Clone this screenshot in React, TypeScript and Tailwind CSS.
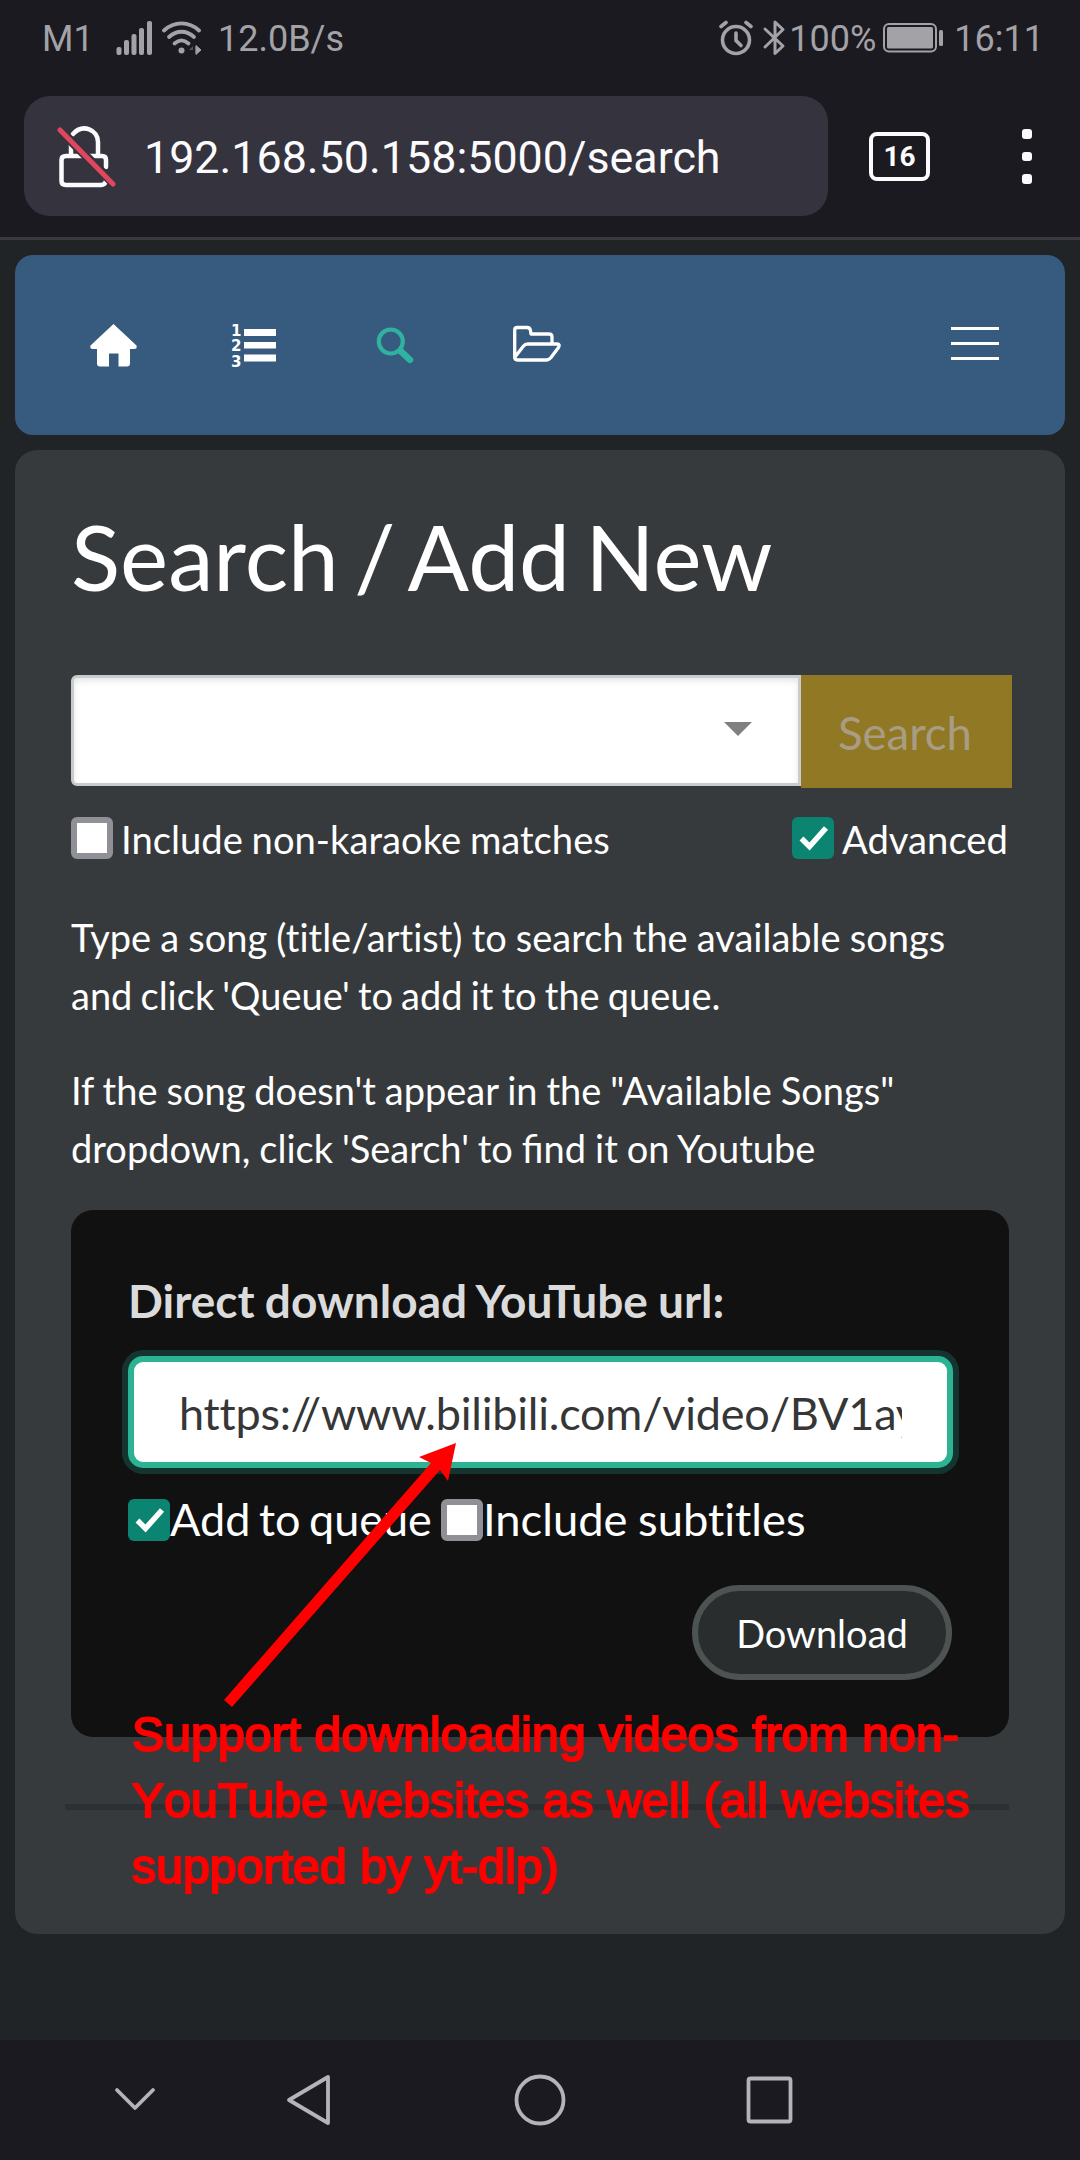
import React from "react";

function StatusBar() {
  return (
    <div className="flex h-[74px] items-center justify-between pt-[1px] pr-[36px] pl-[42px] font-['Roboto',sans-serif] text-[36px] leading-none text-[#a3a2a7]">
      <div className="flex items-center">
        <span className="mt-[2px] w-[74px]">M1</span>
        <svg className="h-[36px] w-[36px]" viewBox="0 0 36 36" fill="currentColor">
          <rect x="0.5" y="27" width="5" height="8" rx="2" />
          <rect x="8" y="20" width="5" height="15" rx="2" />
          <rect x="15.5" y="14" width="5" height="21" rx="2" />
          <rect x="23" y="8" width="5" height="27" rx="2" />
          <rect x="31" y="1" width="5" height="34" rx="2" />
        </svg>
        <svg className="ml-[10px] h-[36px] w-[40px]" viewBox="0 0 40 36" fill="none" stroke="currentColor" strokeWidth="3.8" strokeLinecap="round">
          <path d="M2 10.5C12 1 27 1 37 10.5" />
          <path d="M7 17C14.500 10 24.500 10 32 17" />
          <path d="M12.500 23.500C17 19.500 22 19.500 26.500 23.500" />
          <circle cx="19.500" cy="30.500" r="3" fill="currentColor" stroke="none" />
          <path d="M34 26v8M34.500 26l4.500 4-4.500 4z" strokeWidth="1" fill="currentColor" />
          <path d="M31 26l-4 4h4z" strokeWidth="1" fill="#55545a" stroke="none" />
        </svg>
        <span className="mt-[2px] ml-[16px]">12.0B/s</span>
      </div>
      <div className="flex items-center">
        <svg className="h-[36px] w-[34px]" viewBox="0 0 34 36" fill="none" stroke="currentColor" strokeWidth="3.600" strokeLinecap="round">
          <circle cx="17" cy="20" r="13.500" />
          <path d="M17 13v7.500l5 5" />
          <path d="M2 6.500L7 2.500M32 6.500L27 2.500" />
        </svg>
        <svg className="ml-[9px] h-[36px] w-[24px]" viewBox="0 0 24 36" fill="none" stroke="currentColor" strokeWidth="3" strokeLinejoin="round" strokeLinecap="round">
          <path d="M3 9L21 26L13 33.500V2L21 9.500L3 27" />
        </svg>
        <span className="mt-[2px] ml-[3px] w-[90px] whitespace-nowrap">100%</span>
        <svg className="ml-[4px] h-[30px] w-[61px]" viewBox="0 0 61 30">
          <rect x="1" y="1" width="52" height="27.500" rx="5" fill="none" stroke="currentColor" strokeWidth="2" />
          <rect x="4" y="4" width="46" height="21.500" rx="1.500" fill="currentColor" />
          <rect x="56" y="7" width="4" height="16" rx="1.500" fill="currentColor" />
        </svg>
        <span className="mt-[2px] ml-[10px]">16:11</span>
      </div>
    </div>
  );
}

function BrowserBar() {
  return (
    <div className="flex h-[166px] items-start border-b-[3px] border-[#3a393f] pt-[22px] pl-6">
      <div className="flex h-[120px] w-[804px] items-center rounded-[26px] bg-[#35333d] pl-[33px]">
        <svg className="h-[64px] w-[60px]" viewBox="0 0 60 64" fill="none" strokeWidth="4.500" strokeLinecap="round">
          <path d="M16 10C26 -1 41 6 41 18V32M14 18V32M9 32H45Q49 32 49 36V43M49 57Q48 61 44 61H9Q4.500 61 4.500 57V36Q4.500 32 9 32" stroke="#fbfbfe" />
          <path d="M3.500 6.500L57 60" stroke="#35333d" strokeWidth="9" strokeLinecap="butt" />
          <path d="M3 6L56 60" stroke="#e0475f" strokeWidth="5" />
        </svg>
        <span className="mt-[4px] ml-[27px] font-['Roboto',sans-serif] text-[44.800px] leading-none whitespace-nowrap text-[#fbfbfe]">192.168.50.158:5000/search</span>
      </div>
      <div className="mt-[36px] ml-[41px] flex h-[49px] w-[61px] items-center justify-center rounded-[8px] border-[4.500px] border-[#fbfbfe] font-['Roboto',sans-serif] text-[28px] leading-none font-bold text-[#fbfbfe]">16</div>
      <div className="mt-[33px] ml-[92px] flex flex-col gap-[13px]">
        <i className="size-[9.500px] rounded-[3px] bg-[#fbfbfe]" />
        <i className="size-[9.500px] rounded-[3px] bg-[#fbfbfe]" />
        <i className="size-[9.500px] rounded-[3px] bg-[#fbfbfe]" />
      </div>
    </div>
  );
}

function NavBar() {
  return (
    <nav className="mx-[15px] mt-[15px] flex h-[180px] rounded-[18px] bg-[#375a7f] pt-[65px] pl-[72px] text-white">
      <svg className="h-[54px] w-[54px]" viewBox="0 0 54 54" fill="currentColor">
        <path d="M26.500 4L49.500 25.500Q50.500 29 47 29H43V43.500Q43 46.500 40 46.500H31.500V33.500H22V46.500H13Q10 46.500 10 43.500V29H6Q2.500 29 3.500 25.500Z" />
      </svg>
      <svg className="ml-[88px] h-[54px] w-[54px]" viewBox="0 0 54 54" fill="currentColor">
        <text x="2" y="15.500" fontFamily="DejaVu Sans" fontWeight="700" fontSize="16.500" textLength="10.500" lengthAdjust="spacingAndGlyphs">1</text>
        <text x="2" y="31" fontFamily="DejaVu Sans" fontWeight="700" fontSize="16.500" textLength="10.500" lengthAdjust="spacingAndGlyphs">2</text>
        <text x="2" y="46.800" fontFamily="DejaVu Sans" fontWeight="700" fontSize="16.500" textLength="10.500" lengthAdjust="spacingAndGlyphs">3</text>
        <path d="M15 9h32v7H15zM15 22h32v6.500H15zM15 34.500h32v7H15z" />
      </svg>
      <svg className="ml-[91px] h-[54px] w-[54px]" viewBox="0 0 54 54" fill="none" stroke="#2fb3a0">
        <circle cx="16.800" cy="21.500" r="12" strokeWidth="4.200" />
        <path d="M26.500 31L36 39.800" strokeWidth="6.500" strokeLinecap="round" />
      </svg>
      <svg className="ml-[79px] h-[54px] w-[56px]" viewBox="0 0 56 54" fill="none" stroke="currentColor" strokeWidth="3.300" strokeLinejoin="round">
        <path d="M7.700 37V10Q7.700 7.500 10.500 7.500H20Q23 7.500 23.500 10.500L24 14H42Q45 14 45 17V24M8 37L16.500 26Q18 24 21 24H50Q53.500 24 51.500 27.500L44 37.500Q42 40 39 40H10.500Q7.700 40 7.700 37" />
      </svg>
      <div className="mt-[7px] mr-[66px] ml-auto flex w-[48px] flex-col gap-3">
        <i className="h-[3px] bg-white" />
        <i className="h-[3px] bg-white" />
        <i className="h-[3px] bg-white" />
      </div>
    </nav>
  );
}

function Check({ on }: { on?: boolean }) {
  return on ? (
    <span className="flex size-[42px] shrink-0 items-center justify-center rounded-[6px] bg-[#0b8472]">
      <svg className="size-[42px]" viewBox="0 0 42 42" fill="none" stroke="#fff" strokeWidth="5.500">
        <path d="M9.500 21.500L17.500 29.500L34 11" />
      </svg>
    </span>
  ) : (
    <span className="size-[42px] shrink-0 rounded-[6px] border-[6px] border-[#909097] bg-white" />
  );
}

function DownloadBox() {
  return (
    <section className="mt-[33px] h-[527px] w-[938px] rounded-[22px] bg-[#111111] px-[57px] pt-[57px] text-[45px]">
      <h2 className="h-[89px] text-[46px] leading-[67px] font-bold [word-spacing:-1px] text-[#dbdbdb]">Direct download YouTube url:</h2>
      <div className="h-[112px] w-[825px] rounded-[15px] border-[6px] border-[#2bb394] bg-white pr-[45px] pl-[45px] shadow-[0_0_0_6px_#14352f]">
        <div className="overflow-hidden leading-[102px] tracking-[-0.220px] whitespace-nowrap text-[#363636]">https://www.bilibili.com/video/BV1ay</div>
      </div>
      <div className="mt-[29px] flex h-[46px] items-center whitespace-nowrap">
        <Check on />
        <span className="mb-[2px] w-[271px] leading-none [word-spacing:-3px]">Add to queue</span>
        <Check />
        <span className="mb-[2px] text-[45.300px] leading-none [word-spacing:-1px]">Include subtitles</span>
      </div>
      <button className="mt-[42px] ml-auto block h-[95px] w-[260px] rounded-full border-[6px] border-[#4d5352] bg-[#292d2e] text-[38px] leading-none">Download</button>
    </section>
  );
}

function Annotation() {
  return (
    <>
      <svg className="absolute top-[1435px] left-[215px] h-[280px] w-[250px]" viewBox="215 1435 250 280" fill="#ff0000">
        <path d="M456 1443L448 1481L440 1470L232 1707L224 1700L431 1463L419 1457Z" />
      </svg>
      <p className="absolute top-[1701px] left-[132px] font-['Liberation_Sans',sans-serif] text-[48.300px] leading-[66px] whitespace-nowrap text-[#ff0000] [font-kerning:none] [-webkit-text-stroke:2px_#ff0000]">
        Support downloading videos from non-
        <br />
        YouTube websites as well (all websites
        <br />
        supported by yt-dlp)
      </p>
    </>
  );
}

function SystemNav() {
  return (
    <div className="mt-auto flex h-[120px] bg-[#1b1a20]">
      <svg className="h-[120px] w-[1080px]" viewBox="0 0 1080 120" fill="none" stroke="#b4b3b8" strokeWidth="3.800" strokeLinejoin="round" strokeLinecap="round">
        <path d="M117 50L135 68L153 50" />
        <path d="M328 37V83L289 60Z" />
        <circle cx="540" cy="60" r="23.500" />
        <rect x="748.500" y="38.500" width="42" height="43" rx="2" />
      </svg>
    </div>
  );
}

export default function App() {
  return (
    <div className="relative flex h-[2160px] w-[1080px] flex-col overflow-hidden bg-[#202427] font-['Lato',sans-serif] text-white [font-variant-ligatures:none]">
      <header className="bg-[#1b1a20]">
        <StatusBar />
        <BrowserBar />
      </header>
      <NavBar />
      <main className="mx-[15px] mt-[15px] h-[1484px] rounded-[22px] bg-[#373a3c] pt-[54px] pl-[56px]">
        <h1 className="h-[171px] text-[91px] leading-[104px] [word-spacing:-8px]">Search / Add New</h1>
        <div className="flex w-[942px]">
          <div className="flex h-[111px] w-[730px] justify-end rounded-l-[6px] border-[3px] border-[#c8cccc] bg-white pr-[46px] shadow-[inset_0_3px_6px_rgba(0,0,0,0.1)]">
            <span className="mt-[44px] h-[14px] w-[28px] bg-[#808080] [clip-path:polygon(0_0,100%_0,50%_100%)]" />
          </div>
          <button className="h-[113px] w-[211px] bg-[#917824] pt-[2px] pr-[3px] text-[45.500px] leading-none text-[#a89d83]">Search</button>
        </div>
        <div className="mt-[29px] flex h-[42px] w-[938px] items-center text-[38.200px] leading-none">
          <Check />
          <span className="mt-[3px] ml-[8px] [word-spacing:-1px]">Include non-karaoke matches</span>
          <span className="ml-auto flex items-center gap-[8px]">
            <Check on />
            <span className="mt-[3px] w-[167px]">Advanced</span>
          </span>
        </div>
        <p className="mt-[49px] text-[38px] leading-[58px] [word-spacing:-1.600px]">
          <span className="[word-spacing:-0.600px]">Type a song (title/artist) to search the available songs</span>
          <br />
          and click 'Queue' to add it to the queue.
        </p>
        <p className="mt-[37px] text-[38px] leading-[58px] [word-spacing:-0.800px]">
          If the song doesn't appear in the "Available Songs"
          <br />
          dropdown, click 'Search' to <span className="[font-variant-ligatures:normal]">find</span> it on Youtube
        </p>
        <DownloadBox />
        <hr className="mt-[67px] -ml-[6px] h-[6px] w-[944px] border-0 bg-[#2c3032]" />
      </main>
      <SystemNav />
      <Annotation />
    </div>
  );
}
